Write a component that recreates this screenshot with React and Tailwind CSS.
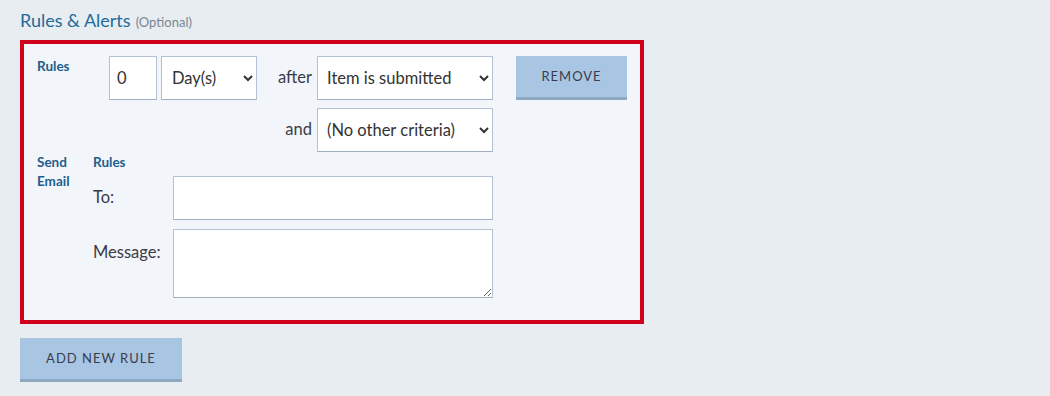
export default function App() {
  const font = { fontFamily: "Lato, 'Open Sans', sans-serif" };
  const field =
    "h-[44px] bg-white border border-[#b3c1d1] border-b-[#a1afbf] text-[16.5px] text-[#333] outline-none";
  return (
    <div className="w-[1050px] h-[396px] bg-[#e8edf2] px-5 pt-[9px] overflow-hidden" style={font}>
      <div className="flex items-baseline gap-[5px] text-[#236a9b]">
        <span className="text-[18px] leading-[22px]">Rules &amp; Alerts</span>
        <span className="text-[13px] text-[#7a8590]">(Optional)</span>
      </div>
      <div className="mt-[7px] w-[624px] h-[284px] border-4 border-[#d0021b] bg-[#f2f5f9] pl-[13px] pt-[12px]">
        <div className="flex">
          <div className="w-[72px] pt-[2px] text-[13.5px] font-bold text-[#1f5e8c] leading-[16px]">Rules</div>
          <div className="flex flex-col gap-2">
            <div className="flex items-center">
              <input className={`${field} w-[48px] px-[7px]`} defaultValue="0" />
              <select className={`${field} w-[96px] ml-1 pl-[6px] pr-[6px]`} defaultValue="d">
                <option value="d">Day(s)</option>
              </select>
              <div className="w-[60px] pr-[5px] text-right text-[16.5px] text-[#3b3b4a]">after</div>
              <select className={`${field} w-[176px] pl-[5px] pr-[6px]`} defaultValue="i">
                <option value="i">Item is submitted</option>
              </select>
              <button className="ml-[23px] w-[111px] h-[44px] bg-[#a8c6e4] border-b-[3px] border-[#8fa9c3] text-[13px] tracking-[1px] text-[#3b3b4b] pt-[1px]">
                REMOVE
              </button>
            </div>
            <div className="flex items-center pl-[148px]">
              <div className="w-[60px] pr-[5px] text-right text-[16.5px] text-[#3b3b4a]">and</div>
              <select className={`${field} w-[176px] pl-[5px] pr-[6px]`} defaultValue="n">
                <option value="n">(No other criteria)</option>
              </select>
            </div>
          </div>
        </div>
        <div className="flex">
          <div className="w-[56px] pt-[1px] text-[13.5px] font-bold text-[#1f5e8c] leading-[19px]">
            Send
            <br />
            Email
          </div>
          <div className="flex flex-col">
            <div className="h-[19px] pt-[1px] text-[13.5px] font-bold text-[#1f5e8c] leading-[19px]">Rules</div>
            <div className="mt-[5px] flex items-center">
              <div className="w-[80px] text-[16.5px] text-[#3b3b4a]">To:</div>
              <input className={`${field} w-[320px] h-[43px] px-2`} />
            </div>
            <div className="mt-[9px] flex">
              <div className="w-[80px] pt-[11px] text-[16.5px] text-[#3b3b4a]">Message:</div>
              <textarea className="w-[320px] h-[69px] bg-white border border-[#b3c1d1] border-b-[#a1afbf] outline-none" />
            </div>
          </div>
        </div>
      </div>
      <button className="mt-[14px] w-[162px] h-[44px] bg-[#a8c6e4] border-b-[3px] border-[#8fa9c3] text-[13px] tracking-[1px] text-[#3b3b4b] pt-[1px]">
        ADD NEW RULE
      </button>
    </div>
  );
}
